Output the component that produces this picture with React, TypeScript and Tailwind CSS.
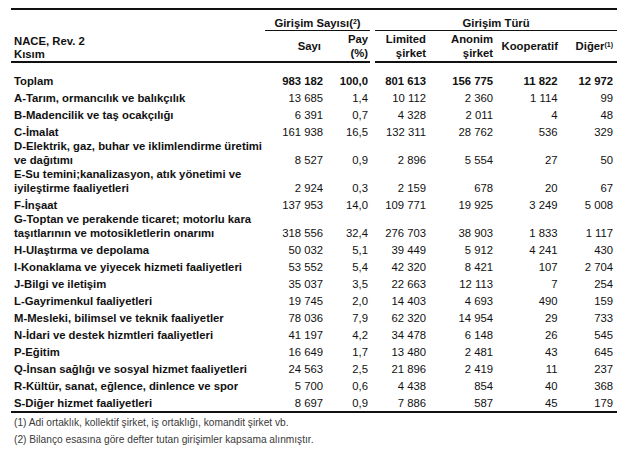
import React from 'react';

type Row = {
  label: string[];
  values: string[];
  total?: boolean;
};

const ROWS: Row[] = [
  { label: ['Toplam'], values: ['983 182', '100,0', '801 613', '156 775', '11 822', '12 972'], total: true },
  { label: ['A-Tarım, ormancılık ve balıkçılık'], values: ['13 685', '1,4', '10 112', '2 360', '1 114', '99'] },
  { label: ['B-Madencilik ve taş ocakçılığı'], values: ['6 391', '0,7', '4 328', '2 011', '4', '48'] },
  { label: ['C-İmalat'], values: ['161 938', '16,5', '132 311', '28 762', '536', '329'] },
  {
    label: ['D-Elektrik, gaz, buhar ve iklimlendirme üretimi', 've dağıtımı'],
    values: ['8 527', '0,9', '2 896', '5 554', '27', '50'],
  },
  {
    label: ['E-Su temini;kanalizasyon, atık yönetimi ve', 'iyileştirme faaliyetleri'],
    values: ['2 924', '0,3', '2 159', '678', '20', '67'],
  },
  { label: ['F-İnşaat'], values: ['137 953', '14,0', '109 771', '19 925', '3 249', '5 008'] },
  {
    label: ['G-Toptan ve perakende ticaret; motorlu kara', 'taşıtlarının ve motosikletlerin onarımı'],
    values: ['318 556', '32,4', '276 703', '38 903', '1 833', '1 117'],
  },
  { label: ['H-Ulaştırma ve depolama'], values: ['50 032', '5,1', '39 449', '5 912', '4 241', '430'] },
  { label: ['I-Konaklama ve yiyecek hizmeti faaliyetleri'], values: ['53 552', '5,4', '42 320', '8 421', '107', '2 704'] },
  { label: ['J-Bilgi ve iletişim'], values: ['35 037', '3,5', '22 663', '12 113', '7', '254'] },
  { label: ['L-Gayrimenkul faaliyetleri'], values: ['19 745', '2,0', '14 403', '4 693', '490', '159'] },
  { label: ['M-Mesleki, bilimsel ve teknik faaliyetler'], values: ['78 036', '7,9', '62 320', '14 954', '29', '733'] },
  { label: ['N-İdari ve destek hizmtleri faaliyetleri'], values: ['41 197', '4,2', '34 478', '6 148', '26', '545'] },
  { label: ['P-Eğitim'], values: ['16 649', '1,7', '13 480', '2 481', '43', '645'] },
  { label: ['Q-İnsan sağlığı ve sosyal hizmet faaliyetleri'], values: ['24 563', '2,5', '21 896', '2 419', '11', '237'] },
  { label: ['R-Kültür, sanat, eğlence, dinlence ve spor'], values: ['5 700', '0,6', '4 438', '854', '40', '368'] },
  { label: ['S-Diğer hizmet faaliyetleri'], values: ['8 697', '0,9', '7 886', '587', '45', '179'] },
];

// right padding per numeric column, matches the ragged right edges of the print table
const PAD = ['pr-[2px]', 'pr-[2px]', 'pr-[2px]', 'pr-[2px]', 'pr-[2.5px]', 'pr-[4px]'];

export default function App() {
  return (
    <div className="bg-white w-[628px] h-[454px] pt-[8px] pl-[11px] text-[#111] font-['Liberation_Sans',Arial,sans-serif] text-[11.3px]">
      <table className="table-fixed w-[606px] border-separate border-spacing-0 border-t-2 border-[#111]">
        <colgroup>
          <col className="w-[254px]" />
          <col className="w-[60px]" />
          <col className="w-[45px]" />
          <col className="w-[5px]" />
          <col className="w-[53px]" />
          <col className="w-[67px]" />
          <col className="w-[65px]" />
          <col className="w-[57px]" />
        </colgroup>
        <thead className="font-bold">
          <tr>
            <th
              rowSpan={2}
              className="text-left align-bottom pl-[3px] pb-0 leading-[13px] border-b-2 border-[#111] font-bold"
            >
              NACE, Rev. 2
              <br />
              Kısım
            </th>
            <th colSpan={2} className="text-center pt-[6px] pb-0 leading-[14px] border-b border-[#111] font-bold">
              Girişim Sayısı(<sup className="text-[7px]">2</sup>)
            </th>
            <th className="w-[5px]" />
            <th colSpan={4} className="text-center pt-[6px] pb-0 leading-[14px] border-b border-[#111] font-bold">
              Girişim Türü
            </th>
          </tr>
          <tr className="h-[32px]">
            <th className="text-right align-middle pr-[4px] leading-[14px] border-b-2 border-[#111] font-bold">Sayı</th>
            <th className="text-right align-middle pr-[2px] leading-[14px] border-b-2 border-[#111] font-bold">
              Pay
              <br />
              (%)
            </th>
            <th />
            <th className="text-right align-middle pr-[2px] leading-[14px] border-b-2 border-[#111] font-bold">
              Limited
              <br />
              şirket
            </th>
            <th className="text-right align-middle pr-[2px] leading-[14px] border-b-2 border-[#111] font-bold">
              Anonim
              <br />
              şirket
            </th>
            <th className="text-right align-middle pr-[2px] leading-[14px] border-b-2 border-[#111] font-bold">
              Kooperatif
            </th>
            <th className="text-right align-middle pr-[4px] leading-[14px] border-b-2 border-[#111] font-bold whitespace-nowrap">
              Diğer<sup className="text-[7px]">(1)</sup>
            </th>
          </tr>
        </thead>
        <tbody>
          {ROWS.map((row, i) => {
            const last = i === ROWS.length - 1;
            const rowH = row.total ? 'h-[26px]' : last ? 'h-[19px]' : row.label.length > 1 ? 'h-[28px]' : 'h-[17px]';
            const cell = `align-bottom pb-[1px] leading-[13.5px] whitespace-nowrap ${
              last ? 'border-b-2 border-[#111]' : ''
            }`;
            return (
              <tr key={row.label[0]} className={rowH}>
                <td className={`${cell} text-left pl-[3px] font-bold`}>
                  {row.label.map((l, j) => (
                    <React.Fragment key={l}>
                      {j > 0 && <br />}
                      {l}
                    </React.Fragment>
                  ))}
                </td>
                {row.values.slice(0, 2).map((v, j) => (
                  <td key={j} className={`${cell} text-right ${PAD[j]} ${row.total ? 'font-bold' : ''}`}>
                    {v}
                  </td>
                ))}
                <td className={cell} />
                {row.values.slice(2).map((v, j) => (
                  <td key={j} className={`${cell} text-right ${PAD[j + 2]} ${row.total ? 'font-bold' : ''}`}>
                    {v}
                  </td>
                ))}
              </tr>
            );
          })}
        </tbody>
      </table>
      <div className="mt-[2px] pl-[3px] text-[10.2px] leading-[16.5px] text-[#3a3a3a]">
        <p>(1) Adi ortaklık, kollektif şirket, iş ortaklığı, komandit şirket vb.</p>
        <p>(2) Bilanço esasına göre defter tutan girişimler kapsama alınmıştır.</p>
      </div>
    </div>
  );
}
